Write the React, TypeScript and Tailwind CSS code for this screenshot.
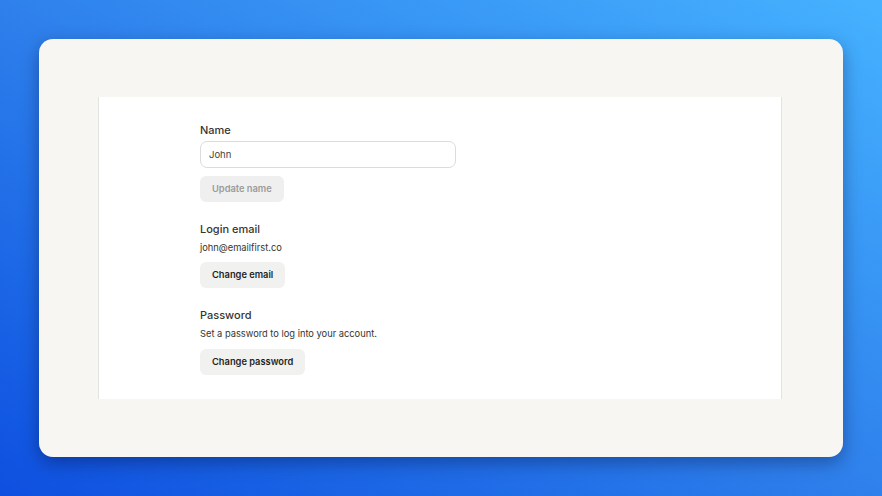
export default function App() {
  return (
    <div
      className="w-[882px] h-[496px] bg-gradient-to-tr from-[#0f4fe0] via-[#2f80ec] to-[#46b2ff] pt-[39px] px-[39px] overflow-hidden"
      style={{ fontFamily: 'Inter, "Noto Sans", sans-serif' }}
    >
      {/* Card */}
      <div className="h-[418px] bg-[#f7f6f3] rounded-[14px] shadow-[0_6px_18px_rgba(0,0,40,0.35)] pt-[58px] pl-[59px] pr-[61px]">
        {/* Settings panel */}
        <div className="bg-white border-x border-[#e3e3e1] pl-[101px] pt-[26px] pb-[24px]">
          {/* Name */}
          <div className="flex flex-col items-start">
            <label className="text-[11px] leading-[15px] font-medium text-[#37352f]">Name</label>
            <input
              defaultValue="John"
              className="mt-[3px] w-[256px] h-[27px] rounded-[7px] border border-[#dcdcdc] px-[8px] text-[9.5px] text-[#3f3f3f] outline-none"
            />
            <button className="mt-[8px] h-[26px] px-[12px] rounded-[6px] bg-[#efefef] text-[9.3px] font-semibold text-[#9b9b9b]">
              Update name
            </button>
          </div>

          {/* Login email */}
          <div className="mt-[20px] flex flex-col items-start">
            <label className="text-[11px] leading-[15px] font-medium text-[#37352f]">Login email</label>
            <p className="mt-[4px] text-[9.3px] leading-[14px] text-[#37352f]">john@emailfirst.co</p>
            <button className="mt-[7px] h-[26px] px-[12px] rounded-[6px] bg-[#f1f1ef] text-[9.3px] font-semibold text-[#1f1f1f]">
              Change email
            </button>
          </div>

          {/* Password */}
          <div className="mt-[20px] flex flex-col items-start">
            <label className="text-[11px] leading-[15px] font-medium text-[#37352f]">Password</label>
            <p className="mt-[4px] text-[9.3px] leading-[14px] text-[#37352f]">Set a password to log into your account.</p>
            <button className="mt-[8px] h-[26px] px-[12px] rounded-[6px] bg-[#f1f1ef] text-[9.3px] font-semibold text-[#1f1f1f]">
              Change password
            </button>
          </div>
        </div>
      </div>
    </div>
  );
}
